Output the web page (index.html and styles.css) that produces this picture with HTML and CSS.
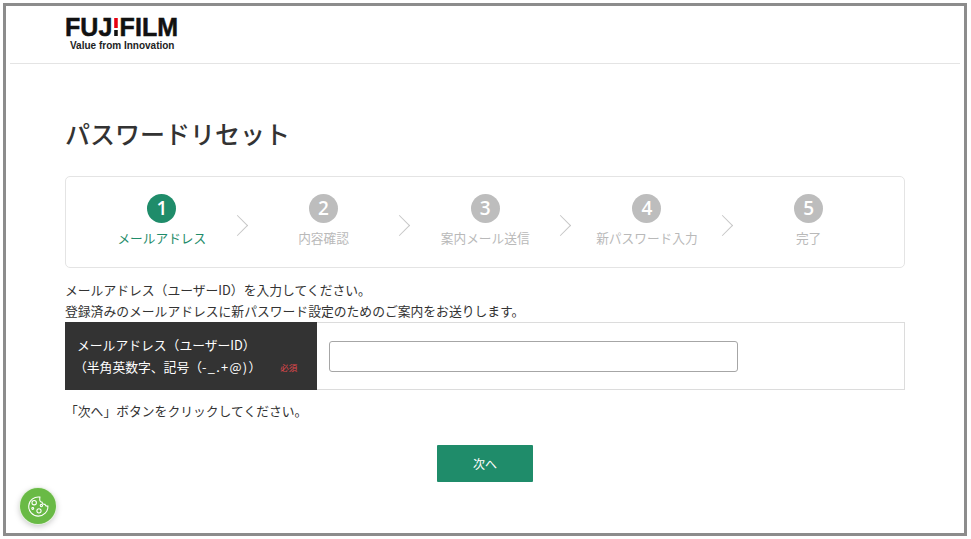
FILE: index.html
```html
<!DOCTYPE html>
<html lang="ja">
<head>
<meta charset="utf-8">
<title>パスワードリセット</title>
<link rel="stylesheet" href="styles.css">
</head>
<body>
<div class="frame">
  <header class="site-header">
    <div class="logo">
      <div class="logo-name">FUJ<span class="logo-i">I</span>FILM</div>
      <div class="logo-tag">Value from Innovation</div>
    </div>
  </header>
  <main class="content">
    <h1 class="title">パスワードリセット</h1>
    <ol class="steps">
      <li class="step step-active"><span class="step-num">1</span><span class="step-label">メールアドレス</span></li>
      <li class="step"><span class="step-num">2</span><span class="step-label">内容確認</span></li>
      <li class="step"><span class="step-num">3</span><span class="step-label">案内メール送信</span></li>
      <li class="step"><span class="step-num">4</span><span class="step-label">新パスワード入力</span></li>
      <li class="step"><span class="step-num">5</span><span class="step-label">完了</span></li>
    </ol>
    <p class="lead">メールアドレス（ユーザーID）を入力してください。</p>
    <p class="lead">登録済みのメールアドレスに新パスワード設定のためのご案内をお送りします。</p>
    <div class="form-row">
      <div class="form-head">
        <div>メールアドレス（ユーザーID）</div>
        <div class="form-head-2">（半角英数字、記号（<span class="symbols">-_.+@)</span>）<span class="required">必須</span></div>
      </div>
      <div class="form-cell"><input class="text-input" type="text" aria-label="メールアドレス"></div>
    </div>
    <p class="note">「次へ」ボタンをクリックしてください。</p>
    <div class="actions"><button class="next" type="button">次へ</button></div>
  </main>
  <button class="cookie" type="button" aria-label="Cookie">
    <svg viewBox="0 0 24 24" width="23" height="23" fill="none" stroke="#fff" stroke-width="1.1">
      <path d="M13.500 2.200a10 10 0 1 0 8.300 9.300c-1.500.3-2.700-.5-3-1.800-1.500.3-2.900-.7-3-2.200-1.500 0-2.700-1.300-2.500-2.800 0-.9 0-1.600.2-2.500z"/>
      <circle cx="7.500" cy="8" r="2.300"/>
      <circle cx="15" cy="11" r="1.200"/>
      <circle cx="12.500" cy="16.500" r="2.200"/>
      <circle cx="6" cy="14" r="1"/>
    </svg>
  </button>
</div>
</body>
</html>
```
FILE: styles.css
```css
* { box-sizing: border-box; }
html, body { margin: 0; padding: 0; background: #fff; }
body {
  width: 971px;
  height: 539px;
  overflow: hidden;
  font-family: "Noto Sans CJK JP", "Noto Sans", sans-serif;
  color: #333;
}
.frame {
  position: relative;
  margin: 3px 0 0 3px;
  width: 964px;
  height: 533px;
  border: 3px solid #8c8c8c;
  padding: 0 4px;
  background: #fff;
}
.site-header {
  height: 58px;
  border-bottom: 1px solid #e4e4e4;
  padding: 9px 0 0 55px;
}
.logo { width: 114px; }
.logo-name {
  font-family: "Liberation Sans", sans-serif;
  font-weight: 700;
  font-size: 25px;
  line-height: 24px;
  letter-spacing: .1px;
  -webkit-text-stroke: .5px #111;
  color: #111;
  white-space: nowrap;
}
.logo-i {
  background: linear-gradient(#e60012 0 55%, #fff 55% 62%, #111 62%);
  -webkit-background-clip: text;
  background-clip: text;
  color: transparent;
  -webkit-text-stroke: 0;
}
.logo-tag {
  font-family: "Liberation Sans", sans-serif;
  font-weight: 700;
  font-size: 10px;
  line-height: 12px;
  margin: 1px 0 0 5px;
  color: #222;
  white-space: nowrap;
}
.content { padding: 0 0 0 55px; width: 895px; }
.title {
  margin: 49px 0 0 0;
  font-size: 25px;
  line-height: 40px;
  font-weight: 500;
  color: #333;
}
.steps {
  list-style: none;
  margin: 23px 0 0 0;
  padding: 17px 0 0 15px;
  height: 92px;
  width: 840px;
  border: 1px solid #e4e4e4;
  border-radius: 5px;
  display: grid;
  grid-template-columns: repeat(5, 161.700px);
}
.step {
  position: relative;
  display: flex;
  flex-direction: column;
  align-items: center;
  color: #b9b9b9;
}
.step:not(:last-child)::after {
  content: "";
  position: absolute;
  left: 149px;
  top: 24px;
  width: 14px;
  height: 14px;
  border-top: 1px solid #c6c6c6;
  border-right: 1px solid #c6c6c6;
  transform: rotate(45deg);
}
.step-num {
  width: 29px;
  height: 29px;
  border-radius: 50%;
  background: #bdbdbd;
  color: #fff;
  font-family: "Open Sans", sans-serif;
  font-size: 19px;
  font-weight: 600;
  line-height: 29px;
  text-align: center;
}
.step-label {
  margin-top: 5px;
  font-size: 12.700px;
  line-height: 20px;
  white-space: nowrap;
}
.step-active .step-num { background: #1f8c6a; }
.step-active .step-label { color: #1f8c6a; }
.lead {
  margin: 0;
  font-size: 12.800px;
  line-height: 21px;
  color: #333;
}
.lead:first-of-type { margin-top: 11px; }
.form-row {
  display: flex;
  width: 840px;
  height: 68px;
  margin-top: 1px;
  border: 1px solid #dcdcdc;
  border-left: 0;
}
.form-head {
  width: 252px;
  margin: -1px 0;
  background: #333;
  color: #fff;
  padding: 12px 0 0 12px;
  font-size: 12.800px;
  line-height: 22px;
}
.form-head-2 { white-space: nowrap; margin-left: -3px; }
.symbols { letter-spacing: 1.300px; }
.required {
  color: #e0474c;
  font-size: 8.500px;
  margin-left: 19px;
  vertical-align: 1px;
}
.form-cell {
  flex: 1;
  display: flex;
  align-items: center;
  padding-left: 12px;
}
.text-input {
  width: 409px;
  height: 31px;
  border: 1px solid #a6a6a6;
  border-radius: 3px;
  background: #fff;
}
.note {
  margin: 10px 0 0 0;
  font-size: 12.800px;
  line-height: 21px;
  color: #333;
}
.actions {
  display: flex;
  justify-content: center;
  width: 840px;
  margin-top: 24px;
}
.next {
  width: 96px;
  height: 37px;
  border: 0;
  border-radius: 1px;
  background: #1f8c6a;
  color: #fff;
  font-family: inherit;
  font-size: 12px;
}
.cookie {
  position: absolute;
  left: 14px;
  top: 482px;
  width: 36px;
  height: 36px;
  padding: 0;
  border: 0;
  border-radius: 50%;
  background: #69ba45;
  box-shadow: 0 0 0 1px #e6f2e0, 0 2px 6px rgba(0,0,0,.25);
  display: flex;
  align-items: center;
  justify-content: center;
}
```
